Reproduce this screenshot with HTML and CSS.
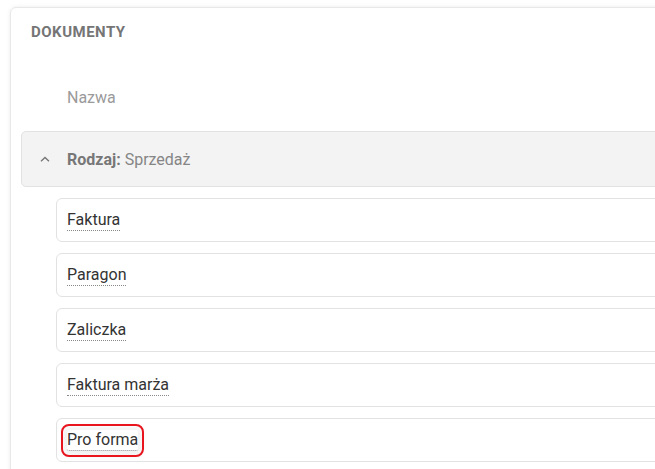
FILE: index.html
```html
<!DOCTYPE html>
<html lang="pl">
<head>
<meta charset="utf-8">
<title>Dokumenty</title>
<link rel="stylesheet" href="styles.css">
</head>
<body>
<div class="card">
  <div class="card-title">DOKUMENTY</div>
  <div class="col-head">Nazwa</div>
  <div class="group">
    <svg class="chev" width="10" height="6" viewBox="0 0 10 6"><path d="M1 5.2 L5 1.4 L9 5.2" fill="none" stroke="#777" stroke-width="1.4"/></svg>
    <span class="group-label"><b>Rodzaj:</b> Sprzedaż</span>
  </div>
  <div class="items">
    <div class="item"><span class="name">Faktura</span></div>
    <div class="item"><span class="name">Paragon</span></div>
    <div class="item"><span class="name">Zaliczka</span></div>
    <div class="item"><span class="name">Faktura marża</span></div>
    <div class="item"><span class="name hl">Pro forma</span></div>
  </div>
</div>
</body>
</html>
```
FILE: styles.css
```css
html, body {
  margin: 0;
  padding: 0;
  background: #fff;
  overflow: hidden;
  font-family: Roboto, "Liberation Sans", sans-serif;
}
.card {
  margin: 7px 0 0 10px;
  width: 720px;
  height: 520px;
  border: 1px solid #e8e8e8;
  border-radius: 6px;
  box-shadow: 0 0 4px rgba(0,0,0,0.08);
  padding: 0 10px;
  box-sizing: border-box;
}
.card-title {
  padding: 14px 10px 0;
  font-size: 15px;
  letter-spacing: 0.5px;
  font-weight: 700;
  color: #757575;
  line-height: 20px;
}
.col-head {
  padding: 46px 0 0 46px;
  font-size: 16px;
  color: #9a9a9a;
  line-height: 20px;
}
.group {
  margin-top: 23px;
  height: 54px;
  background: #f3f3f3;
  border: 1px solid #e2e2e2;
  border-radius: 5px;
  display: flex;
  align-items: center;
}
.chev {
  margin-left: 18px;
  margin-right: 17px;
}
.group-label {
  font-size: 16px;
  color: #858585;
}
.group-label b {
  color: #777;
  font-weight: 700;
}
.items {
  margin: 11px 0 0 35px;
  display: flex;
  flex-direction: column;
  gap: 11px;
}
.item {
  height: 42px;
  border: 1px solid #e2e2e2;
  border-radius: 6px;
  display: flex;
  align-items: center;
  padding-left: 10px;
}
.name {
  font-size: 16px;
  color: #333;
  line-height: 20px;
  border-bottom: 1px dotted #888;
}
.hl {
  outline: 2px solid #e8141e;
  outline-offset: 4px;
  border-radius: 2px;
  box-shadow: 0 0 0 6px rgba(0,0,0,0.0), 0 1px 6px 4px rgba(0,0,0,0.06);
}
```
